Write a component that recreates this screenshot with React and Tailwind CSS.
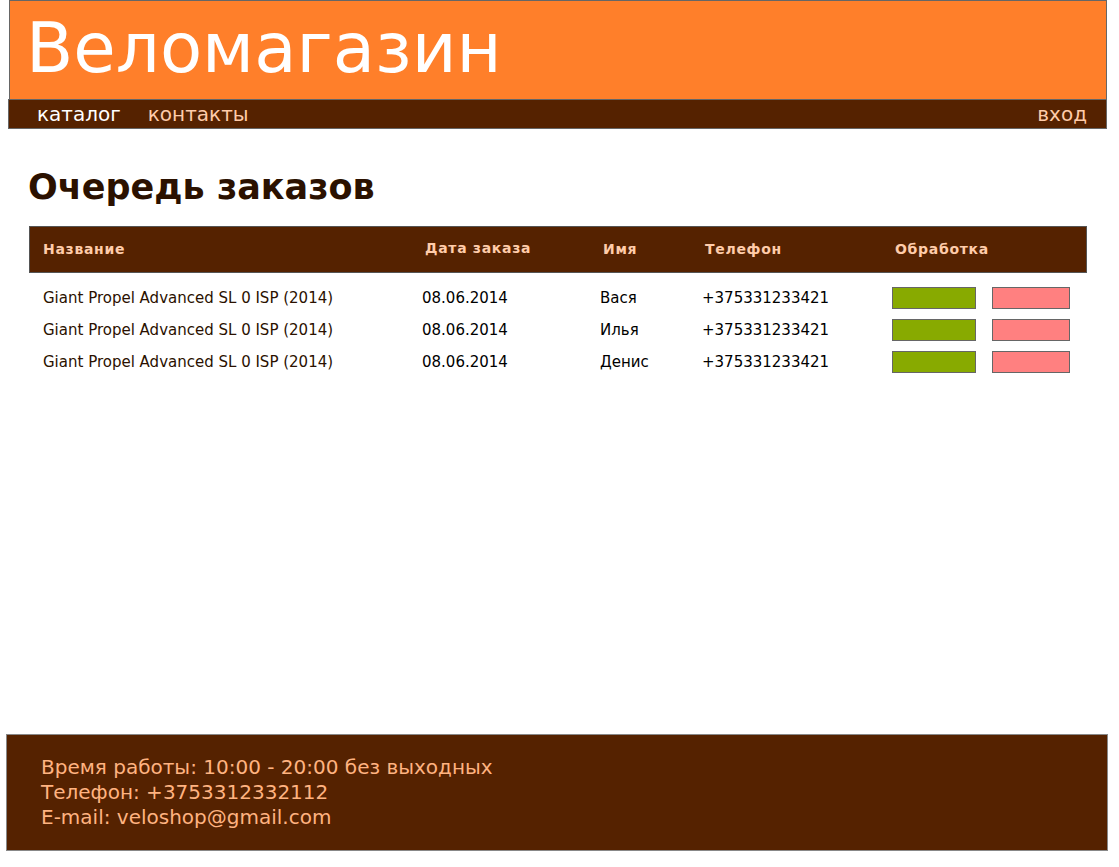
import React from "react";

const orders = [
  { name: "Giant Propel Advanced SL 0 ISP (2014)", date: "08.06.2014", person: "Вася", phone: "+375331233421" },
  { name: "Giant Propel Advanced SL 0 ISP (2014)", date: "08.06.2014", person: "Илья", phone: "+375331233421" },
  { name: "Giant Propel Advanced SL 0 ISP (2014)", date: "08.06.2014", person: "Денис", phone: "+375331233421" },
];

const cols = "grid grid-cols-[382px_178px_102px_190px_1fr]";

const App = () => {
  return (
    <div className="min-h-[867px] bg-white flex flex-col" style={{ fontFamily: '"DejaVu Sans", Verdana, sans-serif' }}>
      {/* Header */}
      <header className="ml-[9px] mr-[12px] h-[99px] bg-[#ff7f2a] border border-b-0 border-[#666] pl-[16px]">
        <h1 className="text-[69px] leading-none text-white pt-[13px]">Веломагазин</h1>
      </header>

      {/* Nav */}
      <nav className="ml-[8px] mr-[12px] h-[30px] bg-[#552200] border border-[#666] flex items-center justify-between pl-[28px] pr-[19px] text-[20px]">
        <div className="flex gap-[27px]">
          <a className="text-white" href="#">каталог</a>
          <a className="text-[#ffccaa]" href="#">контакты</a>
        </div>
        <a className="text-[#ffccaa]" href="#">вход</a>
      </nav>

      {/* Main */}
      <main className="flex-1 pl-[28px] pr-[32px]">
        <h2 className="text-[35px] font-bold text-[#2b1100] mt-[38px] leading-[40px]">Очередь заказов</h2>

        <div className="mt-[19px] ml-[1px]">
          <div className={`${cols} h-[47px] items-center bg-[#552200] border border-[#555] pl-[13px] text-[14px] tracking-[0.7px] font-bold text-[#ffccaa]`}>
            <div>Название</div>
            <div className="-mt-[3px]">Дата заказа</div>
            <div>Имя</div>
            <div>Телефон</div>
            <div>Обработка</div>
          </div>

          <div className="pt-[9px]">
            {orders.map((o, i) => (
              <div key={i} className={`${cols} h-[32px] items-center pl-[13px] text-[15px]`}>
                <div className="text-[#2b1100] pl-[1px]">{o.name}</div>
                <div className="text-black -ml-[2px]">{o.date}</div>
                <div className="text-black -ml-[2px]">{o.person}</div>
                <div className="text-black -ml-[2px]">{o.phone}</div>
                <div className="flex gap-[16px] -ml-[2px]">
                  <button className="w-[84px] h-[22px] bg-[#88aa00] border border-[#666]"></button>
                  <button className="w-[78px] h-[22px] bg-[#ff8080] border border-[#666]"></button>
                </div>
              </div>
            ))}
          </div>
        </div>
      </main>

      {/* Footer */}
      <footer className="ml-[6px] mr-[11px] mb-[16px] h-[117px] bg-[#552200] border border-[#888] pl-[34px] pt-[20px] text-[20px] leading-[25px] text-[#ffb380]">
        <p>Время работы: 10:00 - 20:00 без выходных</p>
        <p>Телефон: +3753312332112</p>
        <p>E-mail: veloshop@gmail.com</p>
      </footer>
    </div>
  );
};

export default App;
